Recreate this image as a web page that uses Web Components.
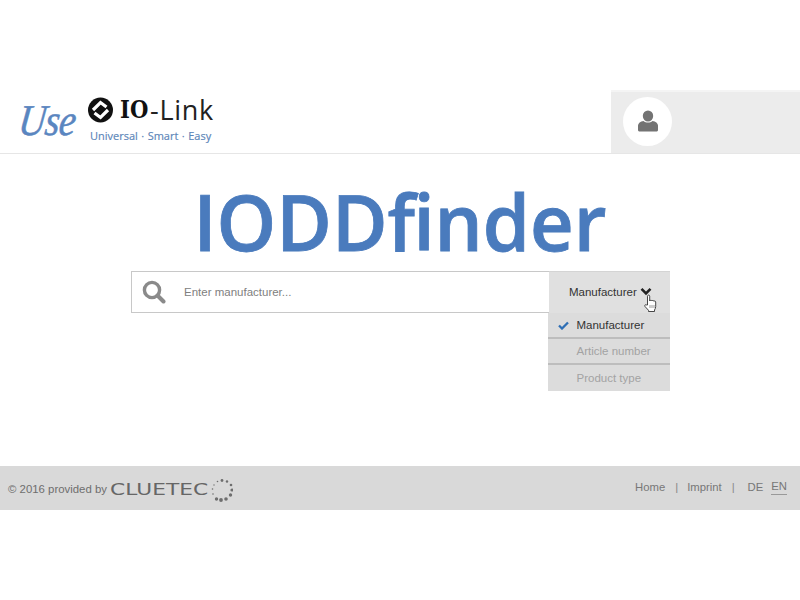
<!DOCTYPE html>
<html><head><meta charset="utf-8"><style>
html,body{margin:0;padding:0;background:#fff}
body{width:800px;height:600px;overflow:hidden;font-family:"Liberation Sans",Arial,sans-serif}
</style></head><body>
<iodd-page>
<iodd-header></iodd-header>
<iodd-title>IODD<span style="letter-spacing:-1.5px">f</span>inder</iodd-title>
<iodd-search></iodd-search>
<iodd-footer></iodd-footer>
</iodd-page>
<script>
function def(name,html){customElements.define(name,class extends HTMLElement{constructor(){super();this.attachShadow({mode:'open'}).innerHTML=html}})}
def('iodd-page',`<style>:host{display:flex;flex-direction:column;width:800px;height:600px;padding-top:90px;box-sizing:border-box}</style><slot></slot>`);
def('iodd-logo',`<style>
:host{display:block;position:relative;width:212px;height:63px;flex:none;margin-left:19px}
.row{display:flex;align-items:flex-start}
.use{font:italic 400 44px/42px "Liberation Serif",serif;color:#5a86c0;-webkit-text-stroke:.5px #5a86c0;width:69px;transform:scaleX(.86) skewX(-8deg);transform-origin:left;margin-top:10px;letter-spacing:-1px}
.main{display:flex;flex-direction:column;margin-top:6px;white-space:nowrap}
.top{display:flex;align-items:center;height:28px}
svg{display:block;margin-right:7px}
.io{display:inline-block;width:30px;font:700 24px/28px "DejaVu Serif",serif;color:#111;transform:scaleX(.88);transform-origin:left}
.link{font:400 27px/28px "Open Sans",sans-serif;color:#222;letter-spacing:.7px}
.tag{font:400 11px/14px "Open Sans",sans-serif;color:#5b85b8;margin:5px 0 0 2px;word-spacing:.6px;-webkit-text-stroke:.15px #5b85b8}
</style><div class="row"><div class="use">Use</div><div class="main"><div class="top">
<svg width="25" height="26" viewBox="0 0 25 26"><circle cx="12.5" cy="13" r="12.5" fill="#111"/><path d="M5 13L12.500 5.500L18.500 10M6.500 16L12.500 20.500L20 13" fill="none" stroke="#fff" stroke-width="3.200"/></svg>
<span class="io">IO</span><span class="link">-Link</span></div>
<div class="tag">Universal · Smart · Easy</div></div></div>`);
def('iodd-user',`<style>
:host{display:flex;align-items:center;width:189px;height:63px;box-sizing:border-box;background:#ececec;border-top:2px solid #f4f4f4;padding:0 0 3px 12px}
.c{width:49px;height:49px;border-radius:50%;background:#fff;display:flex;align-items:center;justify-content:center}
</style><div class="c"><svg width="20" height="22" viewBox="0 0 20 22"><ellipse cx="10" cy="6" rx="5.2" ry="5.6" fill="#737373"/><path d="M0 20v-4.500c0-2.500 2.500-4 5.500-4.600 1.200 1 2.800 1.500 4.500 1.500s3.300-.5 4.500-1.500c3 .6 5.500 2.100 5.500 4.600V20c0 1-1 1.500-2 1.500H2c-1 0-2-.5-2-1.500z" fill="#737373"/></svg></div>`);
def('iodd-header',`<style>:host{display:flex;justify-content:space-between;height:64px;box-sizing:border-box;border-bottom:1px solid #e6e6e6}</style><iodd-logo></iodd-logo><iodd-user></iodd-user>`);
def('iodd-title',`<style>:host{display:block;height:88px;margin-top:29px;color:#4a7bbd}
div{font:600 77px/77px "Open Sans",sans-serif;text-align:center;transform:scaleX(.985);transform-origin:49.500% 50%;-webkit-text-stroke:.8px #4a7bbd}</style><div><slot></slot></div>`);
def('iodd-dropdown',`<style>
:host{display:block;position:absolute;left:416px;top:41px;width:122px;background:#dcdcdc;font:11.500px/24px "Liberation Sans",sans-serif;color:#a3a3a3}
div{height:24px;padding-left:28.500px;border-bottom:2px solid #bdbdbd;position:relative}
div:nth-child(2){line-height:25px}
div:last-child{border-bottom:0;height:26px;line-height:26px}
.on{color:#333}
svg{position:absolute;left:10px;top:8px}
</style><div class="on"><svg width="11" height="9" viewBox="0 0 11 9"><path d="M1 4.500l3 3L10 1.500" fill="none" stroke="#2f6fb5" stroke-width="2.300"/></svg>Manufacturer</div><div>Article number</div><div>Product type</div>`);
def('iodd-search',`<style>
:host{display:flex;position:relative;width:539px;height:42px;box-sizing:border-box;margin-left:131px;border:1px solid #c8c8c8;background:#fff;font:12px/40px "Liberation Sans",sans-serif}
.icon{width:52px;display:flex;align-items:center;padding-left:10px;box-sizing:border-box}
.ph{flex:1;color:#808080;font-size:11.500px}
.btn{width:121px;margin:-1px -1px -1px 0;background:#e0e0e0;display:flex;align-items:center;padding:0 0 2px 20px;box-sizing:border-box;color:#333;font-size:11.500px;position:relative;border-top:1px solid #d4d4d4}
.chev{margin-left:3px}
.hand{position:absolute;left:95px;top:22px}
</style><div class="icon"><svg width="24" height="24" viewBox="0 0 24 24"><circle cx="10" cy="10" r="7.600" fill="none" stroke="#8a8a8a" stroke-width="3.400"/><path d="M15.500 15.500l6 6" stroke="#8a8a8a" stroke-width="4" stroke-linecap="round"/></svg></div>
<div class="ph">Enter manufacturer...</div>
<div class="btn">Manufacturer<svg class="chev" width="12" height="9" viewBox="0 0 12 9"><path d="M1.500 1.800l4.500 4.500 4.500-4.500" fill="none" stroke="#222" stroke-width="2.600"/></svg>
<svg class="hand" width="13" height="19" viewBox="0 0 13 19"><path d="M3.500 11V2.200c0-1.500 2.200-1.500 2.200 0V7c.4-1 2-1 2.200 0 .4-.9 1.900-.7 2 .3.500-.7 1.800-.3 1.800.7v4.500c0 1.500-.6 2.500-1.200 3.500v1.500H4.500V16.300L1 12.500c-.8-1.200.6-2.500 1.700-1.500z" fill="#fff" stroke="#333" stroke-width=".9"/><path d="M6 11v3M8 11v3M10 11v3" stroke="#555" stroke-width=".6"/></svg></div>
<iodd-dropdown></iodd-dropdown>`);
def('iodd-cluetec',`<style>
:host{display:inline-flex;align-items:center;margin-left:3px}
.t{font:400 15px/20px "DejaVu Sans",sans-serif;color:#666;display:inline-block;transform:scaleX(1.45);transform-origin:left;width:101px;margin-top:2px}
svg{display:block;margin-top:2px}
</style><span class="t">CLUETEC</span><svg width="22" height="24" viewBox="1 0 22 24" fill="#6e6e6e"><circle cx="12" cy="2.500" r="1.400"/><circle cx="17" cy="3.500" r="1.200"/><circle cx="21" cy="7" r="1.300"/><circle cx="22" cy="12" r="1.600"/><circle cx="20.500" cy="17" r="1.700"/><circle cx="16" cy="21" r="1.800"/><circle cx="11" cy="22" r="1.900"/><circle cx="6.500" cy="21" r="1.700"/><circle cx="3" cy="16" r=".8"/><circle cx="2.500" cy="11" r=".8"/><circle cx="4" cy="7" r=".7"/><circle cx="7.500" cy="3.500" r=".8"/></svg>`);
def('iodd-footer',`<style>
:host{display:flex;justify-content:space-between;align-items:center;height:44px;margin-top:153px;background:#d9d9d9;font:11.400px/16px "Liberation Sans",sans-serif;color:#6e6e6e;padding:0 13px 0 8px}
.l{display:flex;align-items:center;margin-top:2px}
.r{display:flex;margin-top:-3px;font-size:11.300px;color:#777}
.s{margin:0 9px 0 10px;color:#888}
.en{border-bottom:1px solid #999;line-height:14px;height:15px;margin-left:8px}
.de{margin-left:4px}
</style><div class="l">© 2016 provided by<iodd-cluetec></iodd-cluetec></div>
<div class="r"><span>Home</span><span class="s">|</span><span>Imprint</span><span class="s">|</span><span class="de">DE</span><span class="en">EN</span></div>`);
</script></body></html>
